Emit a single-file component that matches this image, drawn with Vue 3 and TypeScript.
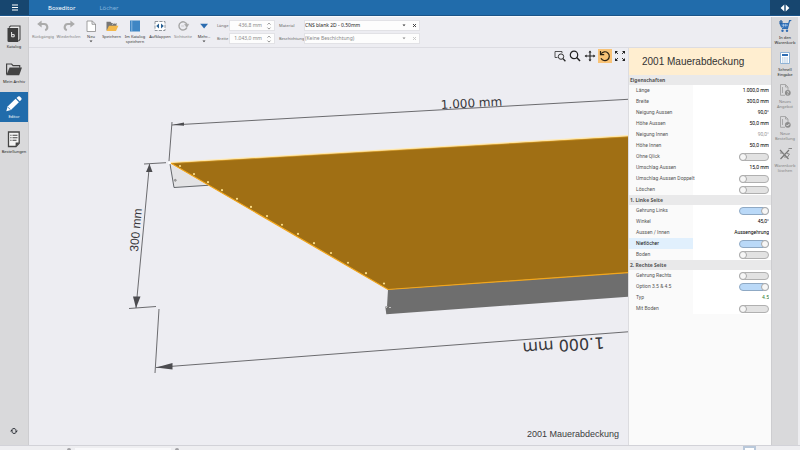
<script setup lang="ts">
import { ref } from 'vue'

interface NavItem { id: string; label: string }
interface PropRow {
  id: string
  label: string
  kind: 'value' | 'toggle'
  value?: string
  on?: boolean
  tone?: 'muted' | 'green'
  selected?: boolean
}
interface Section { title: string; rows: PropRow[] }

const nav: NavItem[] = [
  { id: 'katalog', label: 'Katalog' },
  { id: 'archiv', label: 'Mein Archiv' },
  { id: 'editor', label: 'Editor' },
  { id: 'bestellungen', label: 'Bestellungen' },
]
const activeNav = ref('editor')

const actions = [
  { id: 'cart', lines: ['In den', 'Warenkorb'], disabled: false },
  { id: 'quick', lines: ['Schnell', 'Eingabe'], disabled: false },
  { id: 'offer', lines: ['Neues', 'Angebot'], disabled: true },
  { id: 'order', lines: ['Neue', 'Bestellung'], disabled: true },
  { id: 'clear', lines: ['Warenkorb', 'löschen'], disabled: true },
]

const tools = [
  { id: 'undo', label: 'Rückgängig', dim: true, more: false },
  { id: 'redo', label: 'Wiederholen', dim: true, more: false },
  { id: 'new', label: 'Neu', dim: false, more: true },
  { id: 'save', label: 'Speichern', dim: false, more: false },
  { id: 'book', label: 'Im Katalog speichern', dim: false, more: false },
  { id: 'unfold', label: 'Aufklappen', dim: false, more: false },
  { id: 'side', label: 'Sichtseite', dim: true, more: false },
  { id: 'more', label: 'Mehr...', dim: false, more: true },
]

const sections = ref<Section[]>([
  {
    title: 'Eigenschaften',
    rows: [
      { id: 'laenge', label: 'Länge', kind: 'value', value: '1.000,0 mm' },
      { id: 'breite', label: 'Breite', kind: 'value', value: '300,0 mm' },
      { id: 'neigung-a', label: 'Neigung Aussen', kind: 'value', value: '90,0°' },
      { id: 'hoehe-a', label: 'Höhe Aussen', kind: 'value', value: '50,0 mm' },
      { id: 'neigung-i', label: 'Neigung Innen', kind: 'value', value: '90,0°', tone: 'muted' },
      { id: 'hoehe-i', label: 'Höhe Innen', kind: 'value', value: '50,0 mm' },
      { id: 'qlick', label: 'Ohne Qlick', kind: 'toggle', on: false },
      { id: 'umschlag', label: 'Umschlag Aussen', kind: 'value', value: '15,0 mm' },
      { id: 'doppelt', label: 'Umschlag Aussen Doppelt', kind: 'toggle', on: false },
      { id: 'loeschen', label: 'Löschen', kind: 'toggle', on: false },
    ],
  },
  {
    title: '1. Linke Seite',
    rows: [
      { id: 'gehrung-l', label: 'Gehrung Links', kind: 'toggle', on: true },
      { id: 'winkel', label: 'Winkel', kind: 'value', value: '45,0°' },
      { id: 'aussen-innen', label: 'Aussen / Innen', kind: 'value', value: 'Aussengehrung' },
      { id: 'niet', label: 'Nietlöcher', kind: 'toggle', on: true, selected: true },
      { id: 'boden', label: 'Boden', kind: 'toggle', on: false },
    ],
  },
  {
    title: '2. Rechte Seite',
    rows: [
      { id: 'gehrung-r', label: 'Gehrung Rechts', kind: 'toggle', on: false },
      { id: 'option', label: 'Option 3.5 & 4.5', kind: 'toggle', on: true },
      { id: 'typ', label: 'Typ', kind: 'value', value: '4.5', tone: 'green' },
      { id: 'mit-boden', label: 'Mit Boden', kind: 'toggle', on: false },
    ],
  },
])

const rivets = [180, 194, 208, 222, 237, 251, 267, 282, 298, 314, 331, 348, 366, 384].map((x) => ({
  x,
  y: 166 + (x - 180) * 0.576,
}))

const sizeLength = ref('436,8 mm')
const sizeWidth = ref('1.043,0 mm')
</script>

<template>
  <div class="app">
    <header class="topbar">
      <button class="menu" aria-label="Menü">
        <svg width="8" height="7" viewBox="0 0 8 7"><path d="M1 1h6M1 3.5h6M1 6h6" stroke="#fff" stroke-width="1.1" /></svg>
      </button>
      <nav class="tabs">
        <a href="#" class="tab current">Boxeditor</a>
        <a href="#" class="tab">Löcher</a>
      </nav>
      <button class="collapse" aria-label="Seitenleiste umschalten">
        <svg width="10" height="8" viewBox="0 0 10 8"><path d="M4.3 0.5v7L0.6 4zM5.7 0.5v7L9.4 4z" fill="#fff" /></svg>
      </button>
    </header>

    <div class="body">
      <nav class="sidebar">
        <button
          v-for="n in nav"
          :key="n.id"
          class="nav"
          :class="{ active: n.id === activeNav }"
          @click="activeNav = n.id"
        >
          <svg v-if="n.id === 'katalog'" width="16" height="18" viewBox="0 0 16 18">
            <path d="M3 2.5L4.5 1H14v13.5L12.5 16" fill="#ededed" stroke="#444" stroke-width="1.1" />
            <path d="M1.5 3h10.7v14H2.8q-1.3 0-1.3-1.3z" fill="#3e3e3e" />
            <path d="M5.6 7v4.8h2.6V9.6H5.8" fill="none" stroke="#fff" stroke-width=".9" />
          </svg>
          <svg v-else-if="n.id === 'archiv'" width="18" height="18" viewBox="0 0 18 18">
            <path d="M1.6 14.5V4h5l1.5 1.7h6.6v2" fill="none" stroke="#444" stroke-width="1.2" />
            <path d="M1.3 15.2L4.6 7.6H17l-2.8 7.6z" fill="#444" />
          </svg>
          <svg v-else-if="n.id === 'editor'" width="18" height="18" viewBox="0 0 18 18">
            <path d="M1.3 16.2l1.3-4.7 8-7.7 3.3 3.4-8 7.8z" fill="#fff" />
            <path d="M11.5 3l1.6-1.5q1-.7 1.8.1l1.4 1.5q.7.8 0 1.6l-1.5 1.6z" fill="#fff" />
            <path d="M3 12.2l2.3 2.4" stroke="#216cab" stroke-width=".8" />
          </svg>
          <svg v-else width="16" height="18" viewBox="0 0 16 18">
            <path d="M2.5 2h10.7v11.2L10 16.5H2.5z" fill="#f4f4f4" stroke="#444" stroke-width="1.3" />
            <path d="M13.2 12.6H9.6v4z" fill="#444" />
            <path d="M4.3 5.2h1.2M6.5 5.2h5M4.3 7.7h1.2M6.5 7.7h5M4.3 10.2h1.2M6.5 10.2h4" stroke="#444" stroke-width="1.1" />
          </svg>
          <span>{{ n.label }}</span>
        </button>
        <button class="sync" aria-label="Aktualisieren">
          <svg width="8" height="8" viewBox="0 0 8 8">
            <path d="M2 2.6A2.3 2.3 0 0 1 6 2.8M6 5.4A2.3 2.3 0 0 1 2 5.2" fill="none" stroke="#2b2f36" stroke-width="1" />
            <path d="M0.2 4.6L1.7 2.3 3.2 4.6zM4.8 3.4h3L6.3 5.7z" fill="#2b2f36" />
          </svg>
        </button>
      </nav>

      <div class="center">
        <div class="ribbon">
          <div class="tools">
            <button v-for="t in tools" :key="t.id" class="tool" :class="{ dim: t.dim }">
              <svg width="14" height="14" viewBox="0 0 14 14">
                <template v-if="t.id === 'undo'">
                  <path d="M4.5 5h3.4a3.2 3.2 0 0 1 1.3 6.2" fill="none" stroke="#ababab" stroke-width="2.1" />
                  <path d="M1.2 5L5.6 1.5v7z" fill="#ababab" />
                </template>
                <template v-else-if="t.id === 'redo'">
                  <path d="M9.5 5H6.1a3.2 3.2 0 0 0-1.3 6.2" fill="none" stroke="#ababab" stroke-width="2.1" />
                  <path d="M12.8 5L8.4 1.5v7z" fill="#ababab" />
                </template>
                <path v-else-if="t.id === 'new'" d="M3 2h5.2L11.5 5v7.5H3zM8 2v3.3h3.5" fill="#fff" stroke="#8a8a8a" stroke-width=".8" />
                <template v-else-if="t.id === 'save'">
                  <path d="M1.5 11.5V2.8h4l1 1.2h5v3" fill="#777" />
                  <path d="M1.5 12L4 6.8h9.4L11 12z" fill="#f3b94c" />
                  <path d="M7 5.5q2-2.3 4-1" fill="none" stroke="#ddd" stroke-width=".9" />
                </template>
                <template v-else-if="t.id === 'book'">
                  <path d="M2 1.5h10v11H2z" fill="#3f86c4" />
                  <path d="M3.8 1.5v11" stroke="#9cc4e6" stroke-width=".8" />
                </template>
                <template v-else-if="t.id === 'unfold'">
                  <path d="M2 2.5h10v9H2z" fill="#fff" stroke="#858b92" stroke-width=".9" stroke-dasharray="3.2 1.2" />
                  <path d="M6 4.6v5L3.2 7.1zM8 4.6v5l2.8-2.5z" fill="#285f93" />
                </template>
                <template v-else-if="t.id === 'side'">
                  <path d="M10.8 8.6A4.1 4.1 0 1 1 11 5.8" fill="none" stroke="#a6a6a6" stroke-width="1.4" />
                  <path d="M5.2 7h3M8.6 5.2h4.2l-2 3.4z" fill="#a6a6a6" stroke="#a6a6a6" stroke-width=".5" />
                </template>
                <path v-else d="M3.2 4.8h7.8L7.1 9.6z" fill="#2b6cb0" />
              </svg>
              <span class="caption">{{ t.label }}</span>
              <svg v-if="t.more" class="caret" width="4" height="3" viewBox="0 0 4 3"><path d="M.5.5h3L2 2.3z" fill="#444" /></svg>
            </button>
          </div>

          <div class="fields sizes">
            <label for="f-length">Länge</label>
            <div class="box">
              <input id="f-length" v-model="sizeLength" type="text" />
              <svg class="spin" width="6" height="8" viewBox="0 0 6 8"><path d="M1.5 2.6L3 1.1l1.5 1.5M1.5 5.6L3 7.1l1.5-1.5" fill="none" stroke="#777" stroke-width=".8" /></svg>
            </div>
            <label for="f-width">Breite</label>
            <div class="box">
              <input id="f-width" v-model="sizeWidth" type="text" />
              <svg class="spin" width="6" height="8" viewBox="0 0 6 8"><path d="M1.5 2.6L3 1.1l1.5 1.5M1.5 5.6L3 7.1l1.5-1.5" fill="none" stroke="#777" stroke-width=".8" /></svg>
            </div>
          </div>

          <div class="fields materials">
            <label for="f-material">Material</label>
            <div class="box">
              <select id="f-material" class="dark"><option>CNS blank 2D - 0.50mm</option></select>
              <svg width="4" height="3" viewBox="0 0 4 3"><path d="M.5.5h3L2 2.3z" fill="#333" /></svg>
              <button class="clear" aria-label="Material leeren">
                <svg width="5" height="5" viewBox="0 0 5 5"><path d="M1 1l3 3M4 1L1 4" stroke="#333" stroke-width=".9" /></svg>
              </button>
            </div>
            <label for="f-coating">Beschichtung</label>
            <div class="box">
              <select id="f-coating"><option>(Keine Beschichtung)</option></select>
              <svg width="4" height="3" viewBox="0 0 4 3"><path d="M.5.5h3L2 2.3z" fill="#888" /></svg>
              <button class="clear" aria-label="Beschichtung leeren">
                <svg width="5" height="5" viewBox="0 0 5 5"><path d="M1 1l3 3M4 1L1 4" stroke="#c4c4c4" stroke-width=".9" /></svg>
              </button>
            </div>
          </div>
        </div>

        <div class="work">
          <main class="canvas">
            <svg class="scene" viewBox="29 48 599 397" preserveAspectRatio="xMinYMin slice">
              <path d="M170 164L174 187.5 208 185.5z" fill="#e3e3e5" />
              <path d="M170 164L174 187.5 208 185.3" fill="none" stroke="#55585c" stroke-width=".9" />
              <circle cx="175.3" cy="180.3" r="1" fill="#aaa" stroke="#666" stroke-width=".5" />
              <path d="M388 289.5L628 272.7V296.7L386.3 314.3 385.3 306.5 387 306.5z" fill="#6e6e6e" />
              <path d="M386 308l1.5-1.5M389 307.5h2" stroke="#d8d8d8" stroke-width=".8" />
              <path d="M170 162.8L628 136V272.7L388 289.5z" fill="#a06f14" />
              <path d="M628 135.8L170 162.6" stroke="#ffe9b0" stroke-width="1.4" />
              <path d="M628 136.8L172 163.4" stroke="#d99a20" stroke-width=".6" />
              <path d="M171 163.2L388 289.5 628 272.7" fill="none" stroke="#f2a61c" stroke-width="1.2" />
              <circle v-for="r in rivets" :key="r.x" :cx="r.x" :cy="r.y" r="1.1" fill="#ffe08a" />
              <circle cx="169.5" cy="163" r="1.3" fill="#fff" />

              <g fill="none" stroke="#5c5c60" stroke-width=".9">
                <path d="M172 125L628 99.3M172 122L169 161" />
                <path d="M149.5 164L136 308M144 164l22-1.3M129 308.5l27-2" />
                <path d="M156 367.5L628 331.8M159 309l-4 64" />
              </g>
              <g fill="#4c4c50">
                <path d="M173 124.8l11-2.3v3.2z" />
                <path d="M149.5 164l-3.5 8h6.5z" />
                <path d="M136 308l-3-11.5h7.5z" />
                <path d="M156 367.5l16.5-4.5v6.5z" />
              </g>
              <text class="dim-wide" transform="translate(441 109) rotate(-3.3)">1.000 mm</text>
              <text class="dim-near" transform="translate(604 337) rotate(176)">1.000 mm</text>
              <text class="dim-side" transform="translate(138 252) rotate(-85)">300 mm</text>
            </svg>

            <div class="view-tools">
              <button aria-label="Bereich zoomen">
                <svg width="12" height="12" viewBox="0 0 12 12">
                  <path d="M3.5 7.5H1v-6h7V3" fill="none" stroke="#444" stroke-width=".9" />
                  <circle cx="7" cy="6.6" r="2.7" fill="#ededf2" stroke="#333" stroke-width="1" />
                  <path d="M9 8.6l2.4 2.6" stroke="#222" stroke-width="1.3" />
                </svg>
              </button>
              <button aria-label="Zoomen">
                <svg width="12" height="12" viewBox="0 0 12 12">
                  <circle cx="5" cy="4.9" r="3.7" fill="none" stroke="#222" stroke-width="1.2" />
                  <path d="M7.7 7.6l3.3 3.5" stroke="#222" stroke-width="1.5" />
                </svg>
              </button>
              <button aria-label="Verschieben">
                <svg width="12" height="12" viewBox="0 0 12 12">
                  <path d="M6 1.5v9M1.5 6h9" stroke="#222" stroke-width="1.1" />
                  <path d="M6 .6l1.5 2h-3zM6 11.4l1.5-2h-3zM.6 6l2-1.5v3zM11.4 6l-2-1.5v3z" fill="#222" />
                </svg>
              </button>
              <button class="on" aria-label="Drehen">
                <svg width="12" height="12" viewBox="0 0 12 12">
                  <path d="M2.2 3.8A4.4 4.4 0 1 1 2 8.2" fill="none" stroke="#2b2113" stroke-width="1.2" />
                  <path d="M1.5 1v3.7h3.7" fill="none" stroke="#2b2113" stroke-width="1.2" />
                </svg>
              </button>
              <button aria-label="Einpassen">
                <svg width="12" height="12" viewBox="0 0 12 12">
                  <path d="M1 1h3L1 4zM11 1H8l3 3zM1 11h3L1 8zM11 11H8l3-3z" fill="#222" />
                  <path d="M2 2l2 2M10 2L8 4M2 10l2-2M10 10L8 8" stroke="#222" stroke-width=".9" />
                </svg>
              </button>
            </div>
            <p class="part-name">2001 Mauerabdeckung</p>
          </main>

          <aside class="panel">
            <h1>2001 Mauerabdeckung</h1>
            <section v-for="s in sections" :key="s.title">
              <h2>{{ s.title }}</h2>
              <div v-for="r in s.rows" :key="r.id" class="row" :class="{ selected: r.selected }">
                <label :for="r.id">{{ r.label }}</label>
                <div class="cell">
                  <input v-if="r.kind === 'value'" :id="r.id" v-model="r.value" type="text" :class="r.tone" />
                  <input v-else :id="r.id" v-model="r.on" type="checkbox" />
                </div>
              </div>
            </section>
          </aside>
        </div>
      </div>

      <nav class="actions">
        <button v-for="a in actions" :key="a.id" class="action" :disabled="a.disabled">
          <svg width="14" height="14" viewBox="0 0 14 14">
            <template v-if="a.id === 'cart'">
              <path d="M13.3 1.5h-1.8L9.5 9.5H4M2 4.5h8.5L9.6 8H3.5z" fill="#3c7cc4" stroke="#2f6db3" stroke-width="1.1" />
              <circle cx="4.5" cy="11.8" r="1.2" fill="#2f6db3" /><circle cx="9" cy="11.8" r="1.2" fill="#2f6db3" />
              <path d="M3 1v4M1 3h4" stroke="#1f5b9e" stroke-width="1.2" />
              <path d="M4 6.2h6M5.5 4.8v3M7.7 4.8v3" stroke="#d5e3f2" stroke-width=".5" />
            </template>
            <template v-else-if="a.id === 'quick'">
              <path d="M2.5 1.5h9v11h-9z" fill="#fff" stroke="#86add3" stroke-width=".9" />
              <path d="M4 3h6v2H4z" fill="#2f6db3" />
              <path d="M4 7h6M4 9h6M4 11h6" stroke="#8fb2d6" stroke-width=".9" stroke-dasharray="1.5 .7" />
            </template>
            <template v-else-if="a.id === 'offer' || a.id === 'order'">
              <path d="M7 12.3H2.5V1.5h5L10 4v3M7.5 1.5V4H10M4.5 4v6" fill="none" stroke="#a2a2a2" stroke-width=".9" />
              <circle cx="9.8" cy="9.8" r="2.9" fill="#8d8d8d" />
              <path v-if="a.id === 'offer'" d="M8.9 9q.9-1.2 1.8-.1 0 .6-.9 1v.7M9.8 11v.8" fill="none" stroke="#eee" stroke-width=".7" />
              <path v-else d="M8.3 9.8l1.2 1.2 2-2.2" fill="none" stroke="#eee" stroke-width=".9" />
            </template>
            <template v-else>
              <path d="M2 3l8.5 9M11 3L2.5 12" stroke="#777" stroke-width="1.2" />
              <path d="M2 6h3l2 2.5M9 6.5l2.5.5-2 3H6M10.5 1.5H14" fill="none" stroke="#888" stroke-width="1" />
            </template>
          </svg>
          <span v-for="l in a.lines" :key="l">{{ l }}</span>
        </button>
      </nav>
    </div>

    <footer class="taskbar">
      <i class="mark"></i><i class="smudge"></i><i class="mark"></i><i class="window"></i>
    </footer>
  </div>
</template>

<style>
body {
  margin: 0;
  background: #ededf2;
}
</style>

<style scoped>
.app {
  display: flex;
  flex-direction: column;
  height: 100vh;
  overflow: hidden;
  background: #ededf2;
  color: #444;
  font-family: "Noto Sans", "Open Sans", sans-serif;
  font-size: 5px;
  line-height: 5px;
}
.app *,
.app {
  box-sizing: border-box;
}
button,
input,
select {
  margin: 0;
  padding: 0;
  border: 0;
  background: none;
  color: inherit;
  font: inherit;
  appearance: none;
}
svg {
  display: block;
  flex: none;
}
.topbar {
  display: flex;
  height: 16px;
  flex: none;
  background: #216cab;
  border-bottom: 1px solid #1b5488;
}
.menu,
.collapse {
  display: flex;
  align-items: center;
  justify-content: center;
  width: 29px;
  background: #17466f;
}
.collapse {
  width: 30px;
}
.tabs {
  display: flex;
  flex: 1;
  align-items: center;
  gap: 24px;
  padding-left: 19px;
}
.tab {
  color: #86b4dc;
  font-size: 6px;
  line-height: 8px;
  text-decoration: none;
}
.tab.current {
  color: #fff;
}
.body {
  display: flex;
  flex: 1;
  min-height: 0;
  border-top: 1px solid #fafafc;
}
.sidebar {
  display: flex;
  flex-direction: column;
  gap: 5px;
  width: 29px;
  padding-top: 5px;
  background: #d9d9db;
  border-right: 1px solid #cdcdd0;
}
.nav,
.tool,
.action,
.fields label {
  font-size: 4px;
}
.nav {
  display: flex;
  flex-direction: column;
  align-items: center;
  gap: 1px;
  height: 30px;
  padding-top: 3px;
  color: #222;
  white-space: nowrap;
}
.nav.active {
  background: #216cab;
  color: #fff;
}
.sync {
  margin: auto auto 10px;
}
.center {
  display: flex;
  flex: 1;
  flex-direction: column;
  min-width: 0;
}
.ribbon {
  display: flex;
  height: 31px;
  flex: none;
  padding: 2px 1px;
  border-bottom: 1px solid #dcdce2;
}
.tools {
  display: grid;
  grid-template-columns: 26px 25px 20px 21px 26px 24px 22px 20px;
}
.tool {
  display: flex;
  flex-direction: column;
  align-items: center;
  color: #333;
  white-space: nowrap;
}
.tool.dim {
  color: #808080;
}
.tool:nth-child(5) {
  padding: 0 2px;
  white-space: normal;
}
.caption {
  margin-top: 1px;
}
.caret {
  margin-top: 1px;
}
.fields {
  display: grid;
  align-content: start;
  align-items: center;
  gap: 2px 1px;
  padding-top: 1px;
  padding-left: 3px;
  color: #666;
}
.sizes {
  grid-template-columns: 11px 46px;
}
.materials {
  grid-template-columns: 24px 116px;
  padding-left: 4px;
}
.fields label {
  white-space: nowrap;
}
.box {
  display: flex;
  align-items: center;
  height: 11px;
  padding-right: 2px;
  background: #fdfdfd;
  border: 1px solid #e2e2e6;
}
.box input,
.box select {
  flex: 1;
  width: 0;
  height: 9px;
  color: #888;
  line-height: 9px;
}
.box input {
  padding-right: 4px;
  text-align: right;
}
.box select.dark {
  color: #222;
}
.clear {
  margin-left: 6px;
}
.work {
  display: flex;
  flex: 1;
  min-height: 0;
}
.canvas {
  position: relative;
  flex: 1;
  min-width: 0;
}
.scene {
  width: 100%;
  height: 100%;
}
.scene text {
  fill: #38383c;
}
.dim-wide {
  font-family: "DejaVu Sans", sans-serif;
  font-size: 12px;
}
.dim-near {
  font-family: "DejaVu Sans", sans-serif;
  font-size: 16px;
}
.dim-side {
  font-family: "Liberation Sans", sans-serif;
  font-size: 12px;
}
.view-tools {
  position: absolute;
  top: 1px;
  right: 1px;
  display: flex;
  gap: 1px;
}
.view-tools button {
  display: flex;
  align-items: center;
  justify-content: center;
  width: 14px;
  height: 14px;
}
.view-tools .on {
  background: #f9c377;
}
.part-name {
  position: absolute;
  right: 9px;
  bottom: 5px;
  margin: 0;
  color: #3c3c40;
  font-family: "Liberation Sans", sans-serif;
  font-size: 9px;
  line-height: 12px;
}
.panel {
  width: 143px;
  flex: none;
  overflow: hidden;
  background: #fafafa;
  border-left: 1px solid #dcdce0;
}
.panel h1 {
  margin: 0;
  padding: 0 13px;
  background: #ffeed0;
  color: #333;
  font-family: "Liberation Sans", sans-serif;
  font-size: 10px;
  font-weight: 400;
  line-height: 27px;
}
.panel h2 {
  margin: 0;
  padding-left: 1px;
  background: #e9e9ea;
  color: #555;
  font-size: 5px;
  font-weight: 700;
  line-height: 10px;
}
.row {
  display: flex;
  height: 11px;
  font-family: Roboto, "Noto Sans", sans-serif;
}
.row label {
  z-index: 1;
  width: 64px;
  padding-left: 7px;
  color: #555;
  line-height: 11px;
  white-space: nowrap;
}
.row.selected label {
  background: #e1f0fd;
  color: #111;
}
.cell {
  display: flex;
  flex: 1;
  align-items: center;
  justify-content: flex-end;
  padding-right: 2px;
  background: #fff;
}
.cell input[type="text"] {
  width: 100%;
  height: 11px;
  color: #000;
  line-height: 11px;
  text-align: right;
}
.cell input[type="text"].muted {
  color: #999;
}
.cell input[type="text"].green {
  color: #2e7d32;
}
.cell input[type="checkbox"] {
  display: flex;
  width: 30px;
  height: 8px;
  background: #e2e2e2;
  border: 1px solid #b0b0b0;
  border-radius: 4px;
}
.cell input[type="checkbox"]::before {
  width: 8px;
  height: 8px;
  margin: -1px;
  background: #f6f6f6;
  border: 1px solid #a8a8a8;
  border-radius: 50%;
  box-sizing: border-box;
  content: "";
}
.cell input[type="checkbox"]:checked {
  justify-content: flex-end;
  background: #bad9f8;
  border-color: #8fa9c4;
}
.actions {
  display: flex;
  flex-direction: column;
  gap: 6px;
  width: 29px;
  padding-top: 2px;
  background: #d9d9db;
  border-right: 2px solid #ededf0;
  border-left: 1px solid #cdcdd0;
}
.action {
  display: flex;
  flex-direction: column;
  align-items: center;
  height: 26px;
  color: #222;
  white-space: nowrap;
}
.action svg {
  margin-bottom: 2px;
}
.action:disabled {
  color: #808080;
}
.taskbar {
  display: flex;
  height: 5px;
  flex: none;
  padding: 0 44px 0 67px;
  background: #eeeef1;
  border-top: 1px solid #d2d2d8;
}
.mark {
  width: 4px;
  height: 2px;
  margin-top: 2px;
  background: #a0a0a4;
  border-radius: 2px 2px 0 0;
}
.smudge {
  width: 96px;
  height: 2px;
  margin: 2px 4px 0;
  background: #f9f9fb;
}
.window {
  width: 13px;
  height: 4px;
  margin-left: auto;
  background: #fff;
  border: 2px solid #b9c8da;
  border-bottom: 0;
}
</style>
